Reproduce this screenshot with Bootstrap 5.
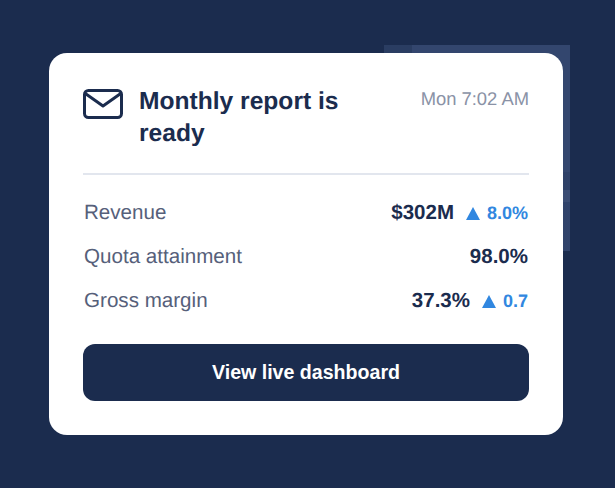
<!DOCTYPE html>
<html lang="en">

<head>
    <meta charset="UTF-8">
    <meta name="viewport" content="width=device-width, initial-scale=1.0">
    <title>Monthly report</title>
    <link href="https://cdn.jsdelivr.net/npm/bootstrap@5.3.3/dist/css/bootstrap.min.css" rel="stylesheet">
    <script src="https://cdn.jsdelivr.net/npm/bootstrap@5.3.3/dist/js/bootstrap.bundle.min.js"></script>
    <style>
        body {
            background-color: #1b2c4e;
            font-family: "Liberation Sans", Arial, sans-serif;
            height: 488px;
            overflow: hidden;
            text-rendering: geometricPrecision;
        }

        .report-stage {
            padding: 53px 52px 53px 49px;
            position: relative;
        }

        /* faint panel peeking out behind the card */
        .back-panel {
            position: absolute;
            left: 384px;
            top: 45px;
            width: 186px;
            height: 206px;
            background: linear-gradient(180deg, transparent 0 127px, rgba(27, 44, 78, .2) 127px 145px, rgba(255, 255, 255, .04) 145px 157px, rgba(27, 44, 78, .1) 157px),
                linear-gradient(90deg, #2a3d62 0 28px, #33466e 28px);
        }

        .report-card {
            position: relative;
            border-radius: 18px;
            padding: 33px 34px 34px;
            height: 382px;
            border: 0;
        }

        .mail-icon {
            width: 40px;
            height: 30px;
            flex: none;
            margin-top: 3px;
            margin-right: 16px;
        }

        .report-title {
            color: #1b2c4e;
            font-size: 24.6px;
            line-height: 32px;
            font-weight: 700;
            margin: 0;
            width: 240px;
        }

        .report-time {
            color: #8a92a6;
            font-size: 18.4px;
            line-height: 24px;
            margin-top: 1px;
        }

        .report-rule {
            height: 2px;
            background: #e2e6ee;
            margin: 23px 0 16.4px;
        }

        .stat-row {
            height: 44.7px;
        }

        .stat-label {
            color: #56607a;
            font-size: 20.6px;
            padding-left: 1px;
        }

        .stat-value {
            color: #1b2c4e;
            font-size: 20.5px;
            font-weight: 700;
        }

        .stat-delta {
            color: #3187e0;
            font-size: 18px;
            font-weight: 700;
            margin-left: 12px;
            margin-right: 1px;
        }

        .delta-arrow {
            width: 14px;
            height: 13px;
            margin-right: 7px;
            vertical-align: -1px;
        }

        .dash-btn {
            background: #1b2c4e;
            color: #fff;
            font-size: 19.6px;
            font-weight: 700;
            border-radius: 12px;
            height: 58px;
            margin-top: 19.6px;
            padding-top: 5px;
            padding-bottom: 5px;
        }

        .dash-btn:hover {
            background: #1b2c4e;
            color: #fff;
        }

        .value-pad {
            margin-right: 1px;
        }
    </style>
</head>

<body>
    <div class="report-stage">
        <div class="back-panel"></div>
        <div class="card report-card">
            <div class="d-flex align-items-start">
                <svg class="mail-icon" viewBox="0 0 40 30" fill="none" stroke="#1b2c4e" stroke-width="3"
                    stroke-linejoin="round" stroke-linecap="round">
                    <rect x="1.5" y="1.5" width="37" height="27" rx="4" />
                    <path d="M3 5 L20 17 L37 5" />
                </svg>
                <h1 class="report-title">Monthly report is ready</h1>
                <div class="report-time ms-auto">Mon 7:02 AM</div>
            </div>
            <div class="report-rule"></div>
            <div class="stat-row d-flex align-items-center justify-content-between">
                <span class="stat-label">Revenue</span>
                <span><span class="stat-value">$302M</span><span class="stat-delta"><svg class="delta-arrow"
                            viewBox="0 0 14 13"><path d="M7 0 L14 13 L0 13 Z" fill="#3187e0" /></svg>8.0%</span></span>
            </div>
            <div class="stat-row d-flex align-items-center justify-content-between">
                <span class="stat-label">Quota attainment</span>
                <span class="stat-value value-pad">98.0%</span>
            </div>
            <div class="stat-row d-flex align-items-center justify-content-between">
                <span class="stat-label">Gross margin</span>
                <span><span class="stat-value">37.3%</span><span class="stat-delta"><svg class="delta-arrow"
                            viewBox="0 0 14 13"><path d="M7 0 L14 13 L0 13 Z" fill="#3187e0" /></svg>0.7</span></span>
            </div>
            <button type="button" class="btn dash-btn w-100">View live dashboard</button>
        </div>
    </div>
</body>

</html>
